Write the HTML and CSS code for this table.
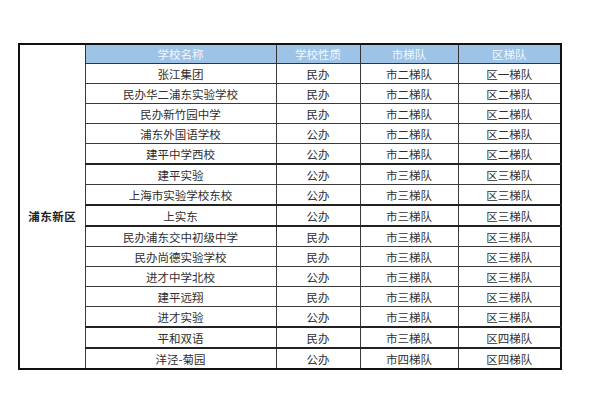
FILE: index.html
```html
<!DOCTYPE html>
<html lang="zh">
<head>
<meta charset="utf-8">
<link rel="stylesheet" href="styles.css">
</head>
<body>
<table class="grid">
  <colgroup>
    <col class="c-region"><col class="c-name"><col class="c-type"><col class="c-city"><col class="c-dist">
  </colgroup>
  <thead>
    <tr class="head">
      <th class="blank"></th><th>学校名称</th><th>学校性质</th><th>市梯队</th><th>区梯队</th>
    </tr>
  </thead>
  <tbody>
    <tr><td class="region" rowspan="15">浦东新区</td><td>张江集团</td><td>民办</td><td>市二梯队</td><td>区一梯队</td></tr>
    <tr><td>民办华二浦东实验学校</td><td>民办</td><td>市二梯队</td><td>区二梯队</td></tr>
    <tr><td>民办新竹园中学</td><td>民办</td><td>市二梯队</td><td>区二梯队</td></tr>
    <tr><td>浦东外国语学校</td><td>公办</td><td>市二梯队</td><td>区二梯队</td></tr>
    <tr class="thick"><td>建平中学西校</td><td>公办</td><td>市二梯队</td><td>区二梯队</td></tr>
    <tr><td>建平实验</td><td>公办</td><td>市三梯队</td><td>区三梯队</td></tr>
    <tr class="thick"><td>上海市实验学校东校</td><td>公办</td><td>市三梯队</td><td>区三梯队</td></tr>
    <tr class="thick"><td>上实东</td><td>公办</td><td>市三梯队</td><td>区三梯队</td></tr>
    <tr><td>民办浦东交中初级中学</td><td>民办</td><td>市三梯队</td><td>区三梯队</td></tr>
    <tr><td>民办尚德实验学校</td><td>民办</td><td>市三梯队</td><td>区三梯队</td></tr>
    <tr><td>进才中学北校</td><td>公办</td><td>市三梯队</td><td>区三梯队</td></tr>
    <tr><td>建平远翔</td><td>民办</td><td>市三梯队</td><td>区三梯队</td></tr>
    <tr class="thick"><td>进才实验</td><td>公办</td><td>市三梯队</td><td>区三梯队</td></tr>
    <tr class="thick"><td>平和双语</td><td>民办</td><td>市三梯队</td><td>区四梯队</td></tr>
    <tr><td>洋泾-菊园</td><td>公办</td><td>市四梯队</td><td>区四梯队</td></tr>
  </tbody>
</table>
</body>
</html>
```
FILE: styles.css
```css
html, body {
  margin: 0;
  background: #ffffff;
}
body {
  padding: 43px 0 0 18px;
  font-family: "Noto Sans CJK SC", "Noto Sans", sans-serif;
}
.grid {
  border-collapse: collapse;
  border: 2px solid #111;
  table-layout: fixed;
  width: 542px;
}
.c-region { width: 66px; }
.c-name { width: 191px; }
.c-type { width: 84px; }
.c-city { width: 98px; }
.c-dist { width: 103px; }
.grid th, .grid td {
  border: 1px solid #3a3a3a;
  padding: 0;
  text-align: center;
  font-size: 11.5px;
  line-height: 14px;
  color: #2e2e2e;
  font-weight: normal;
  white-space: nowrap;
}
.head th {
  background: #9dc3e6;
  color: #f4f8fc;
  height: 18px;
  border-color: #333;
}
.head th.blank {
  background: #fff;
  border-bottom: none;
}
.grid tbody td {
  height: 19px;
}
.grid tbody tr.thick td {
  border-bottom: 2px solid #222;
}
.grid td.region {
  font-weight: bold;
  color: #222;
  border-bottom: none;
  border-top: none;
  letter-spacing: 0.5px;
}
```
